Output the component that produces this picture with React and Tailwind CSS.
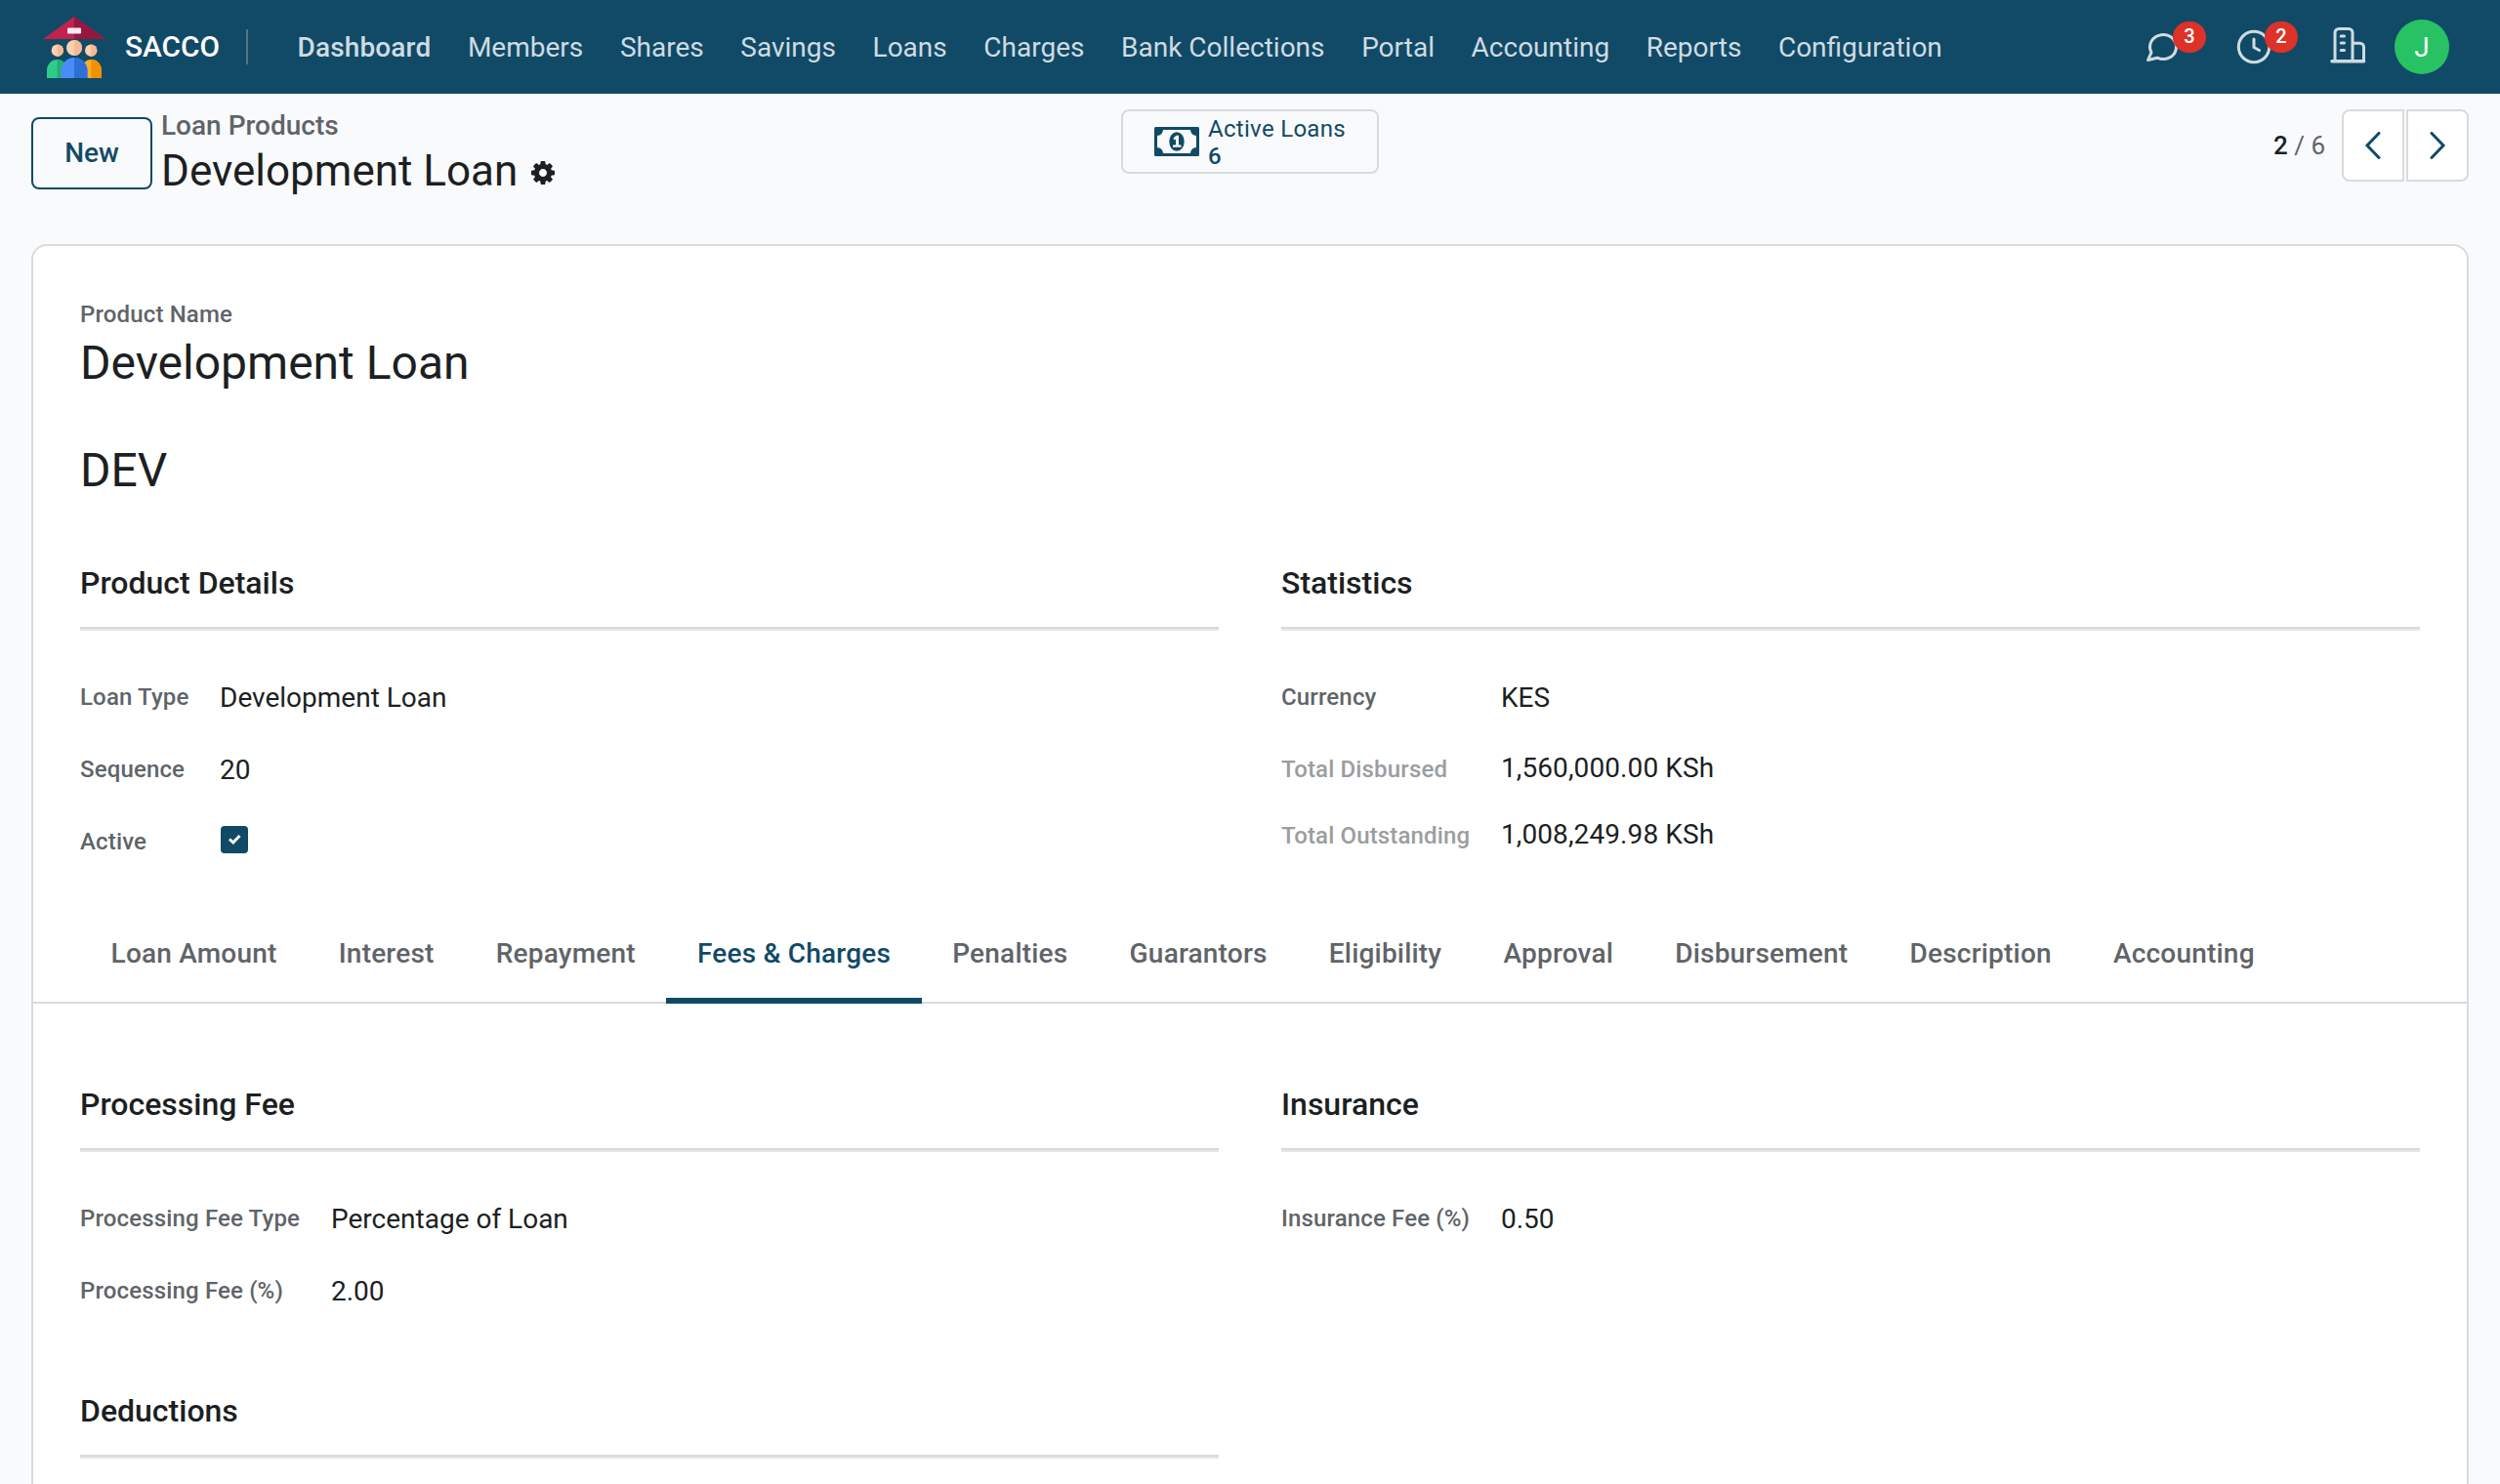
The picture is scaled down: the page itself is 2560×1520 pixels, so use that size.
const navItems = [
  "Dashboard",
  "Members",
  "Shares",
  "Savings",
  "Loans",
  "Charges",
  "Bank Collections",
  "Portal",
  "Accounting",
  "Reports",
  "Configuration",
];

const tabs = [
  "Loan Amount",
  "Interest",
  "Repayment",
  "Fees & Charges",
  "Penalties",
  "Guarantors",
  "Eligibility",
  "Approval",
  "Disbursement",
  "Description",
  "Accounting",
];

function AppLogo() {
  return (
    <svg width="64" height="64" viewBox="0 0 64 64">
      {/* Roof */}
      <path d="M32 1 L64 24 H0 Z" fill="#c1224f" />
      <path d="M32 1 L64 24 H32 Z" fill="#98173d" />
      <rect x="25" y="12.500" width="14" height="6" rx="1" fill="#fdeaf0" />
      {/* Side members */}
      <path d="M4 64 V56 a10.500 11 0 0 1 21 0 V64 Z" fill="#2ecc8b" />
      <path d="M14.500 45 a10.500 11 0 0 1 10.500 11 V64 H14.500 Z" fill="#27ae76" />
      <path d="M39 64 V56 a10.500 11 0 0 1 21 0 V64 Z" fill="#fbab2c" />
      <path d="M49.500 45 a10.500 11 0 0 1 10.500 11 V64 H49.500 Z" fill="#f29100" />
      <circle cx="14.800" cy="35.700" r="6.200" fill="#fcd0b0" />
      <path d="M14.800 29.500 a6.200 6.200 0 0 1 0 12.400 Z" fill="#f5b993" />
      <circle cx="49.200" cy="35.700" r="6.200" fill="#fcd0b0" />
      <path d="M49.200 29.500 a6.200 6.200 0 0 1 0 12.400 Z" fill="#f5b993" />
      {/* Front member */}
      <path d="M18.500 64 V56.500 a13.500 13.500 0 0 1 27 0 V64 Z" fill="#4a8cf7" />
      <path d="M32 43 a13.500 13.500 0 0 1 13.500 13.500 V64 H32 Z" fill="#2f6fd6" />
      <circle cx="32" cy="33" r="8" fill="#fcd0b0" />
      <path d="M32 25 a8 8 0 0 1 0 16 Z" fill="#f5b993" />
    </svg>
  );
}

function ChatIcon() {
  return (
    <svg width="36" height="36" viewBox="0 0 36 36" fill="none" stroke="#cfdbe2" strokeWidth="3" strokeLinejoin="round">
      <path d="M7 23.700 A13.500 12.500 0 1 1 13 29.200 L3.500 31.500 Z" />
    </svg>
  );
}

function ClockIcon() {
  return (
    <svg width="36" height="36" viewBox="0 0 36 36" fill="none" stroke="#cfdbe2" strokeWidth="3" strokeLinecap="round" strokeLinejoin="round">
      <circle cx="18" cy="18" r="15.700" />
      <path d="M18 10 V18.500 L23.500 21.500" />
    </svg>
  );
}

function CompanyIcon() {
  return (
    <svg width="37" height="40" viewBox="0 0 37 40" fill="none" stroke="#cfdbe2" strokeWidth="3" strokeLinecap="round">
      <path d="M2 34.700 H34.500" strokeWidth="3.600" />
      <path d="M5 34 V5.500 a4 4 0 0 1 4 -4 H19 a4 4 0 0 1 4 4 V34" />
      <path d="M24 16.200 H30.500 a4 4 0 0 1 4 4 V34" />
      <path d="M11.200 9 H14.500 M11.200 16 H14.500 M11.200 23.500 H14.500" />
    </svg>
  );
}

function MoneyIcon() {
  return (
    <svg width="46" height="30" viewBox="0 0 46 30">
      <rect width="46" height="30" rx="1.500" fill="#114a66" />
      <path d="M9 3 H37 a6 6 0 0 0 6 6 V21 a6 6 0 0 0 -6 6 H9 a6 6 0 0 0 -6 -6 V9 a6 6 0 0 0 6 -6 Z" fill="#f9fafb" />
      <ellipse cx="23" cy="15" rx="7.700" ry="9.800" fill="#114a66" />
      <path d="M19.500 11.500 L22.500 8.800 H25 V18.500 H27.500 V20.800 H19 V18.500 H22 V12.500 L20.500 13.500 Z" fill="#f9fafb" />
    </svg>
  );
}

function GearIcon() {
  return (
    <svg className="mt-[3px]" width="24" height="24" viewBox="0 128 1536 1536" fill="currentColor" fillRule="evenodd">
      <path d="M1024 896q0-106-75-181t-181-75-181 75-75 181 75 181 181 75 181-75 75-181zm512-109v222q0 12-8 23t-20 13l-185 28q-19 54-39 91 35 50 107 138 10 12 10 25t-9 23q-27 37-99 108t-94 71q-12 0-26-9l-138-108q-44 23-91 38-16 136-29 186-7 28-36 28h-222q-14 0-24.500-8.500t-11.500-21.500l-28-184q-49-16-90-37l-141 107q-10 9-25 9-14 0-25-11-126-114-165-168-7-10-7-23 0-12 8-23 15-21 51-66.500t54-70.500q-27-50-41-99l-183-27q-13-2-21-12.500t-8-23.500v-222q0-12 8-23t19-13l186-28q14-46 39-92-40-57-107-138-10-12-10-24 0-10 9-23 26-36 98.500-107.500t94.500-71.500q13 0 26 10l138 107q44-23 91-38 16-136 29-186 7-28 36-28h222q14 0 24.500 8.500t11.500 21.500l28 184q49 16 90 37l142-107q9-9 24-9 13 0 25 10 129 119 165 170 7 8 7 22 0 12-8 23-15 21-51 66.500t-54 70.500q26 50 41 98l183 28q13 2 21 12.500t8 23.500z" />
    </svg>
  );
}

function Badge({ children }) {
  return (
    <span className="absolute left-[29px] -top-2 h-8 w-[34px] rounded-full bg-[#dc3228] text-white text-[20px] font-medium leading-[30px] text-center">
      {children}
    </span>
  );
}

function Navbar() {
  return (
    <header className="h-24 shrink-0 bg-[#114a66] flex items-center text-[28px] text-[#cfdbe2] whitespace-nowrap">
      <div className="ml-[44px]">
        <AppLogo />
      </div>
      <span className="ml-5 w-[97px] text-white text-[29.800px] font-medium">SACCO</span>
      <div className="ml-[27px] w-[2px] h-9 bg-[#4d778c]" />
      <nav className="ml-[50.500px] pt-[2px] flex items-center gap-[37.600px]">
        {navItems.map((item, i) => (
          <a key={item} className={i === 0 ? "font-medium tracking-[0.150px]" : ""}>
            {item}
          </a>
        ))}
      </nav>
      <div className="ml-auto mr-[52px] flex items-center">
        <div className="relative mr-[58px]">
          <ChatIcon />
          <Badge>3</Badge>
        </div>
        <div className="relative mr-[60px]">
          <ClockIcon />
          <Badge>2</Badge>
        </div>
        <CompanyIcon />
        <div className="ml-[29px] pt-[2px] size-14 rounded-full bg-[#28c264] text-white flex items-center justify-center">J</div>
      </div>
    </header>
  );
}

function ControlPanel() {
  return (
    <div className="h-[154px] shrink-0 px-8 flex justify-between items-start">
      <div className="flex flex-1">
        <button className="mt-6 h-[74px] w-[124px] rounded-lg border-2 border-[#114a66] text-[#114a66] font-medium">New</button>
        <div className="ml-[9px] mt-[14px]">
          <div className="leading-[38px] font-medium text-[#5f6469]">Loan Products</div>
          <div className="flex items-center gap-[13.500px] text-[44px] leading-[54px]">
            Development Loan
            <GearIcon />
          </div>
        </div>
      </div>
      <div className="mt-4 h-[66px] w-[264px] rounded-lg border-2 border-[#d8dadd] flex items-center pl-8 gap-[9px] text-[#114a66] text-[24px] leading-7">
        <MoneyIcon />
        <div className="pt-[2px] tracking-[0.300px]">
          <div>Active Loans</div>
          <div className="font-medium">6</div>
        </div>
      </div>
      <div className="flex-1 flex justify-end items-center mt-4 text-[26px] text-[#5f6469]">
        <span>
          <span className="font-medium text-[#1c1f23]">2</span> / 6
        </span>
        <div className="ml-[17px] flex gap-[2px]">
          <button className="h-[74px] w-16 bg-white border-2 border-[#d8dadd] rounded-l-lg flex items-center justify-center">
            <svg width="18" height="28" viewBox="0 0 18 28" fill="none" stroke="#114a66" strokeWidth="3" strokeLinecap="round">
              <path d="M15 1.500 L3 14 L15 26.500" />
            </svg>
          </button>
          <button className="h-[74px] w-16 bg-white border-2 border-[#d8dadd] rounded-r-lg flex items-center justify-center">
            <svg width="18" height="28" viewBox="0 0 18 28" fill="none" stroke="#114a66" strokeWidth="3" strokeLinecap="round">
              <path d="M3 1.500 L15 14 L3 26.500" />
            </svg>
          </button>
        </div>
      </div>
    </div>
  );
}

function Group({ title, children }) {
  return (
    <section>
      <h2 className="h-[68px] text-[32px] leading-[42px] font-medium border-b-2 border-[#d8dadd]">{title}</h2>
      <div className="h-[2px] bg-[#e7e7e8]" />
      <div className="pt-[31px]">{children}</div>
    </section>
  );
}

function Field({ label, labelWidth, rowHeight = "h-[74px]", muted, children }) {
  return (
    <div className={`flex items-center ${rowHeight}`}>
      <div className={`${labelWidth} shrink-0 text-[24px] font-medium tracking-[0.150px] ${muted ? "text-[#9b9da0]" : "text-[#5f6469]"}`}>
        {label}
      </div>
      <div className={muted ? "pb-[2px] tracking-[0.100px]" : "pt-[2px]"}>{children}</div>
    </div>
  );
}

export default function App() {
  return (
    <div className="h-[1520px] w-[2560px] overflow-hidden bg-[#f9fafb] font-[Roboto,sans-serif] text-[28px] text-[#1c1f23] flex flex-col">
      <Navbar />
      <ControlPanel />
      <main className="mx-8 flex-1 min-h-0 overflow-hidden bg-white border-2 border-b-0 border-[#d8dadd] rounded-t-2xl">
        <div className="px-12 pt-[52px]">
          <div className="text-[24px] leading-9 font-medium tracking-[0.150px] text-[#5f6469]">Product Name</div>
          <h1 className="mt-[2px] text-[48px] leading-[60px]">Development Loan</h1>
          <div className="mt-[50px] text-[48px] leading-[60px]">DEV</div>
        </div>

        <div className="mt-[64px] px-12 h-[364px] grid grid-cols-2 gap-16">
          <Group title="Product Details">
            <Field label="Loan Type" labelWidth="w-[143px]">Development Loan</Field>
            <Field label="Sequence" labelWidth="w-[143px]">20</Field>
            <Field label="Active" labelWidth="w-[144px]">
              <div className="mb-[6px] size-7 rounded bg-[#114a66] flex items-center justify-center">
                <svg width="14" height="12" viewBox="0 0 14 12" fill="none" stroke="white" strokeWidth="3">
                  <path d="M2 5.500 L5.800 9 L12.500 2" />
                </svg>
              </div>
            </Field>
          </Group>
          <Group title="Statistics">
            <Field label="Currency" labelWidth="w-[225px]">KES</Field>
            <Field label="Total Disbursed" labelWidth="w-[225px]" muted>1,560,000.00 KSh</Field>
            <Field label="Total Outstanding" labelWidth="w-[225px]" rowHeight="h-[62px]" muted>1,008,249.98 KSh</Field>
          </Group>
        </div>

        <div className="flex h-[88px] px-12 border-b-2 border-[#d8dadd]">
          {tabs.map((tab) => (
            <a
              key={tab}
              className={
                tab === "Fees & Charges"
                  ? "h-[88px] px-[31.600px] leading-[73px] font-medium tracking-[0.200px] text-[#114a66] border-b-[6px] border-[#114a66]"
                  : "h-[88px] px-[31.600px] leading-[73px] font-medium tracking-[0.200px] text-[#5f6469]"
              }
            >
              {tab}
            </a>
          ))}
        </div>

        <div className="mt-[82px] px-12 grid grid-cols-2 gap-x-16">
          <div>
            <div className="h-[314px]">
              <Group title="Processing Fee">
                <Field label="Processing Fee Type" labelWidth="w-[257px]">Percentage of Loan</Field>
                <Field label="Processing Fee (%)" labelWidth="w-[257px]">2.00</Field>
              </Group>
            </div>
            <Group title="Deductions" />
          </div>
          <Group title="Insurance">
            <Field label="Insurance Fee (%)" labelWidth="w-[225px]">0.50</Field>
          </Group>
        </div>
      </main>
    </div>
  );
}
